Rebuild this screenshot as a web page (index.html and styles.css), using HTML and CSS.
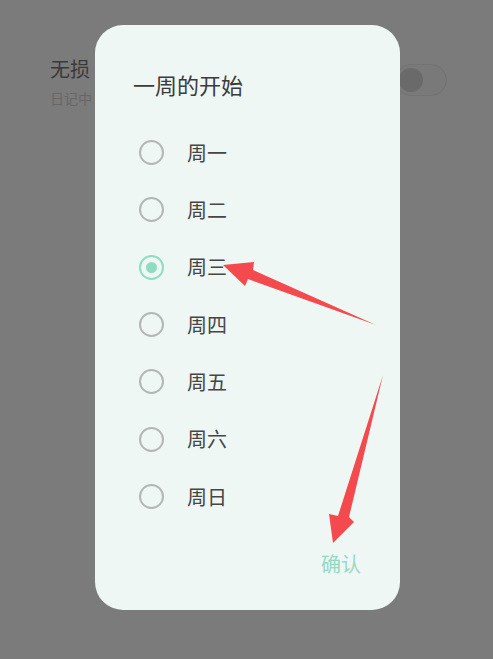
FILE: index.html
```html
<!DOCTYPE html>
<html lang="zh-CN">
<head>
<meta charset="utf-8">
<title>一周的开始</title>
<link rel="stylesheet" href="styles.css">
</head>
<body>
<div class="screen">
  <div class="setting-row">
    <div class="setting-text">
      <div class="setting-title">无损</div>
      <div class="setting-sub">日记中</div>
    </div>
    <div class="toggle"><div class="knob"></div></div>
  </div>

  <div class="dialog">
    <div class="dialog-title">一周的开始</div>
    <ul class="options">
      <li class="option"><span class="radio"></span><span class="label">周一</span></li>
      <li class="option"><span class="radio"></span><span class="label">周二</span></li>
      <li class="option"><span class="radio checked"></span><span class="label">周三</span></li>
      <li class="option"><span class="radio"></span><span class="label">周四</span></li>
      <li class="option"><span class="radio"></span><span class="label">周五</span></li>
      <li class="option"><span class="radio"></span><span class="label">周六</span></li>
      <li class="option"><span class="radio"></span><span class="label">周日</span></li>
    </ul>
    <div class="actions"><span class="confirm">确认</span></div>
  </div>

  <svg class="arrows" width="493" height="659" viewBox="0 0 493 659">
    <polygon points="223,265 254,262 253,270 376,325 248,279 245,286" />
    <polygon points="383,375 349,517 354,522 333,543 329,514 338,516" />
  </svg>
</div>
</body>
</html>
```

FILE: styles.css
```css
* { box-sizing: border-box; }
html, body {
  margin: 0;
  padding: 0;
  background: #7b7b7b;
}
body {
  font-family: "Noto Sans CJK SC", "Noto Sans", sans-serif;
}
.screen {
  position: relative;
  width: 493px;
  height: 659px;
  overflow: hidden;
  background: #7b7b7b;
}
.setting-row {
  display: flex;
  align-items: center;
  justify-content: space-between;
  padding: 54px 46px 0 50px;
}
.setting-title {
  font-size: 20px;
  line-height: 30px;
  color: #3a3a3a;
  white-space: nowrap;
}
.setting-sub {
  margin-top: 4px;
  font-size: 14px;
  line-height: 20px;
  color: #676767;
  white-space: nowrap;
}
.toggle {
  width: 52px;
  height: 32px;
  border-radius: 16px;
  border: 1px solid #737373;
  background: #797979;
  display: flex;
  align-items: center;
  padding-left: 3px;
  margin-top: -2px;
}
.knob {
  width: 24px;
  height: 24px;
  border-radius: 50%;
  background: #6a6a6a;
}
.dialog {
  position: absolute;
  left: 95px;
  top: 25px;
  width: 305px;
  height: 585px;
  border-radius: 28px;
  background: #eef7f4;
  padding: 44px 39px 0 38px;
  display: flex;
  flex-direction: column;
}
.dialog-title {
  font-size: 22px;
  line-height: 30px;
  color: #3b3b3b;
}
.options {
  list-style: none;
  margin: 25px 0 0 6px;
  padding: 0;
}
.option {
  height: 57.33px;
  display: flex;
  align-items: center;
  gap: 23px;
}
.radio {
  width: 25px;
  height: 25px;
  border-radius: 50%;
  border: 2.5px solid #b3b6b5;
  display: flex;
  align-items: center;
  justify-content: center;
  flex: none;
}
.radio.checked {
  border-color: #8edcc2;
}
.radio.checked::after {
  content: "";
  width: 11px;
  height: 11px;
  border-radius: 50%;
  background: #8edcc2;
}
.label {
  font-size: 20px;
  line-height: 28px;
  color: #464646;
}
.actions {
  display: flex;
  justify-content: flex-end;
  margin-top: 25px;
}
.confirm {
  font-size: 20px;
  line-height: 28px;
  color: #95d9c3;
}
.arrows {
  position: absolute;
  left: 0;
  top: 0;
  pointer-events: none;
}
.arrows polygon {
  fill: #f4494d;
}
```
